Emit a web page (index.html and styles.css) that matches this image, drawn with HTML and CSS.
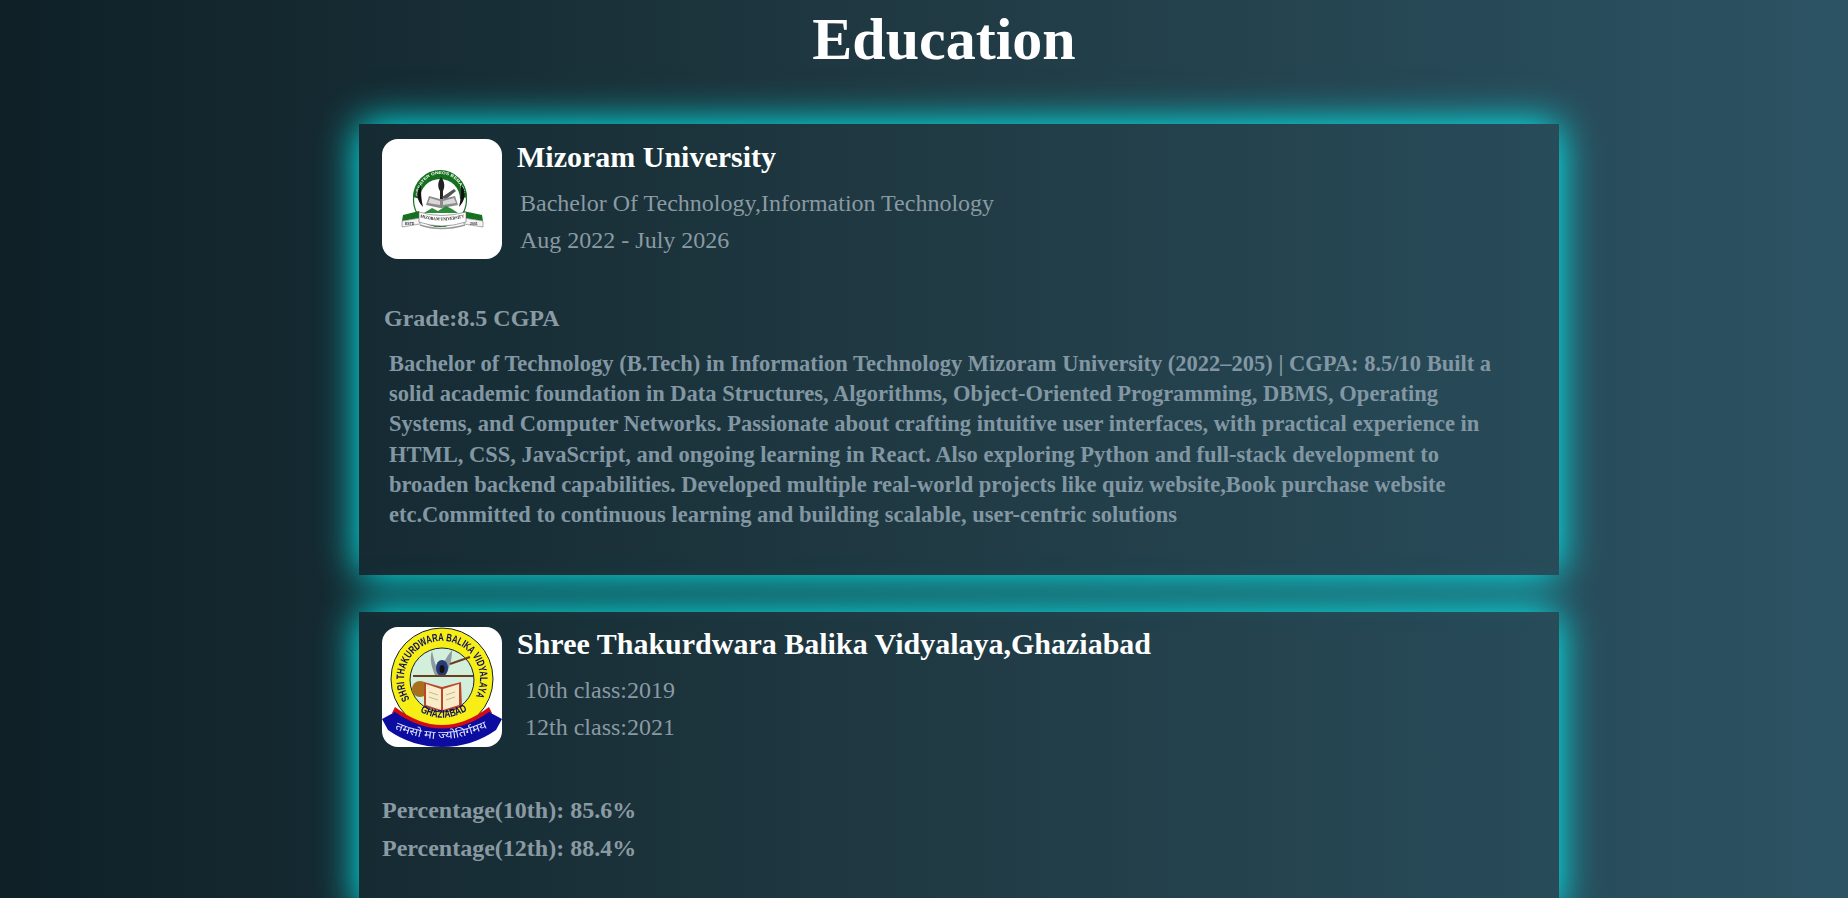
FILE: index.html
```html
<!DOCTYPE html>
<html lang="en">
  <head>
    <meta charset="UTF-8" />
    <meta name="viewport" content="width=device-width, initial-scale=1.0" />
    <title>Education</title>
    <link rel="stylesheet" href="styles.css">
  </head>
  <body>
    <h1 class="page-title">Education</h1>

    <div class="edu-card">
      <div class="edu-head">
        <div class="edu-logo">
          <svg viewBox="0 0 120 120" width="120" height="120">
            <defs>
              <path id="mzuArc" d="M36.500 57 A22 22 0 0 1 80.500 57" />
              <path id="mzuBan" d="M37 78 Q59 85 84 78" />
            </defs>
            <circle cx="58" cy="61" r="26.500" fill="#fff" stroke="#15701f" stroke-width="1.2" />
            <path d="M31 58 A27 27 0 0 1 85 58 L78 60 A20 20 0 0 0 38 60 Z" fill="#15701f" />
            <text class="mzu-arc-text"><textPath href="#mzuArc" textLength="66" lengthAdjust="spacingAndGlyphs">GREATER ONEOS BEMAGN</textPath></text>
            <path d="M59 38 C55 44 56 49 58 52 L58 60 L61 60 L61 52 C63 48 63 43 59 38 Z" fill="#222" />
            <path d="M60 58 L72 50 L74 52 L63 61 Z" fill="#555" />
            <path d="M47 57 L58 60 L60 60 L73 57 L76 66 L60 69 L58 69 L44 66 Z" fill="#8b8b8b" />
            <path d="M48 59 L58 62 L58 66 L46 64 Z M61 62 L72 59 L74 64 L61 66 Z" fill="#d8d8d8" />
            <path d="M39 46 C33 53 35 62 41 68 C39 60 39 54 39 46 Z" fill="#111" />
            <path d="M79 46 C85 53 83 62 77 68 C79 60 79 54 79 46 Z" fill="#111" />
            <path d="M42 74 L50 69 L56 72 L64 67 L70 70 L76 74 Z" fill="#2d8a3a" />
            <path d="M21 76 L37 72 L38 79 L20 82 Z M81 72 L100 76 L101 82 L82 79 Z" fill="#15701f" />
            <path d="M20 82 L38 79 L38 85 L20 88 Z M82 79 L101 82 L101 88 L82 85 Z" fill="#f4f4f4" stroke="#777" stroke-width=".6" />
            <path d="M37 73 Q59 80 84 73 L84 83 Q59 91 37 83 Z" fill="#fff" stroke="#666" stroke-width=".6" />
            <path d="M38 86 Q59 93 83 86" fill="none" stroke="#999" stroke-width="1.500" />
            <text class="mzu-ban-text"><textPath href="#mzuBan" textLength="45" lengthAdjust="spacingAndGlyphs" startOffset="1">MIZORAM UNIVERSITY</textPath></text>
            <text class="mzu-year-text" x="23" y="86">ESTD</text>
            <text class="mzu-year-text" x="88" y="86">2001</text>
          </svg>
        </div>
        <div class="edu-info">
          <h2 class="edu-name">Mizoram University</h2>
          <p class="edu-line">Bachelor Of Technology,Information Technology</p>
          <p class="edu-line">Aug 2022 - July 2026</p>
        </div>
      </div>
      <p class="edu-grade">Grade:8.5 CGPA</p>
      <p class="edu-desc">Bachelor of Technology (B.Tech) in Information Technology Mizoram University (2022–205) | CGPA: 8.5/10 Built a solid academic foundation in Data Structures, Algorithms, Object-Oriented Programming, DBMS, Operating Systems, and Computer Networks. Passionate about crafting intuitive user interfaces, with practical experience in HTML, CSS, JavaScript, and ongoing learning in React. Also exploring Python and full-stack development to broaden backend capabilities. Developed multiple real-world projects like quiz website,Book purchase website etc.Committed to continuous learning and building scalable, user-centric solutions</p>
    </div>

    <div class="edu-card">
      <div class="edu-head">
        <div class="edu-logo">
          <svg viewBox="0 0 120 120" width="120" height="120">
            <defs>
              <path id="stbArc" d="M27.800 72.100 A38 38 0 1 1 92.200 72.100" />
              <path id="stbGhz" d="M37 84 Q60 98 86 83" />
              <path id="stbMotto" d="M11 101 Q60 124 109 99" />
            </defs>
            <circle cx="60" cy="52" r="51" fill="#f6ee14" stroke="#123" stroke-width="1" />
            <circle cx="60" cy="53" r="32" fill="#d2efdc" stroke="#123" stroke-width="1" />
            <path d="M50 24 C52 34 54 40 58 46 C60 38 64 30 70 23 C70 32 68 42 62 50 L54 50 C50 42 47 32 50 24 Z" fill="#8d9ba0" />
            <ellipse cx="60" cy="41" rx="6" ry="8" fill="#263a78" />
            <ellipse cx="60" cy="42" rx="2.500" ry="4" fill="#111" />
            <path d="M31 49 L91 49 M68 37 L88 30" stroke="#6a3f1c" stroke-width="2" />
            <circle cx="38" cy="62" r="8" fill="#a8701c" />
            <path d="M42 55 L60 60 L79 55 L80 80 L60 85 L42 80 Z" fill="#b9462f" />
            <path d="M44 57 L59 62 L59 83 L44 78 Z M61 62 L77 57 L77 78 L61 83 Z" fill="#f8edc8" />
            <path d="M47 65 L56 68 M47 70 L56 73 M64 68 L73 65 M64 73 L73 70" stroke="#c9b98a" stroke-width="1" />
            <path d="M13 80 Q60 116 107 80 L110 86 Q60 122 10 86 Z" fill="#d60b12" />
            <path d="M0 92 L13 85 Q60 118 107 85 L120 92 L114 103 Q90 120 60 120 Q30 120 6 103 Z" fill="#0c0ca0" />
            <text class="stb-arc-text"><textPath href="#stbArc" textLength="158" lengthAdjust="spacingAndGlyphs">SHRI THAKURDWARA BALIKA VIDYALAYA</textPath></text>
            <text class="stb-ghz-text"><textPath href="#stbGhz" textLength="50" lengthAdjust="spacingAndGlyphs" startOffset="1">GHAZIABAD</textPath></text>
            <text class="stb-motto-text"><textPath href="#stbMotto" textLength="96" lengthAdjust="spacingAndGlyphs" startOffset="2">तमसो मा ज्योतिर्गमय</textPath></text>
          </svg>
        </div>
        <div class="edu-info edu-info-up">
          <h2 class="edu-name">Shree Thakurdwara Balika Vidyalaya,Ghaziabad</h2>
          <p class="edu-line edu-line-in">10th class:2019</p>
          <p class="edu-line edu-line-in">12th class:2021</p>
        </div>
      </div>
      <p class="edu-pct edu-pct-first">Percentage(10th): 85.6%</p>
      <p class="edu-pct">Percentage(12th): 88.4%</p>
    </div>
  </body>
</html>
```

FILE: styles.css
```css
html,
body {
  margin: 0;
  padding: 0;
}

body {
  font-family: "Liberation Serif", "Times New Roman", serif;
  background: linear-gradient(to right, #0f2027, #203a43, #2c5364);
  background-attachment: fixed;
  color: #fff;
  height: 898px;
  overflow: hidden;
}

.page-title {
  font-size: 60px;
  line-height: 69px;
  margin: 5px 0 50px;
  padding-left: 40px;
  text-align: center;
}

.edu-card {
  width: 1200px;
  box-sizing: border-box;
  margin: 0 0 37px 359px;
  padding: 15px 22px 45px 23px;
  box-shadow: 0 0 38px #00ffff;
}

.edu-head {
  display: flex;
  align-items: flex-start;
}

.edu-logo {
  width: 120px;
  height: 120px;
  border-radius: 16px;
  background: #fff;
  overflow: hidden;
  flex-shrink: 0;
}

.edu-logo svg {
  display: block;
  filter: blur(0.35px);
}

.edu-info {
  margin-left: 15px;
}

.edu-info-up {
  margin-top: -1px;
}

.edu-name {
  font-size: 30px;
  line-height: 32px;
  margin: 2px 0 12px;
}

.edu-line {
  font-size: 24px;
  line-height: 37px;
  margin: 0 0 0 3px;
  color: #8a9aa3;
}

.edu-line-in {
  margin-left: 8px;
}

.edu-grade {
  font-size: 24px;
  font-weight: bold;
  line-height: 30px;
  margin: 44px 0 0 2px;
  color: #8a9aa3;
}

.edu-desc {
  font-size: 22.500px;
  font-weight: bold;
  line-height: 30.240px;
  margin: 16px 40px 0 7px;
  color: #8297a3;
}

.edu-pct {
  font-size: 24px;
  font-weight: bold;
  line-height: 38px;
  margin: 0;
  color: #8a9aa3;
}

.edu-pct-first {
  margin-top: 44px;
}

.mzu-arc-text {
  font: bold 4px "Liberation Sans", sans-serif;
  fill: #fff;
}

.mzu-ban-text {
  font: bold 4.500px "Liberation Serif", serif;
  fill: #222;
}

.mzu-year-text {
  font: bold 3.500px "Liberation Sans", sans-serif;
  fill: #333;
}

.stb-arc-text {
  font: bold 11px "Liberation Sans", sans-serif;
  fill: #0c0c60;
}

.stb-ghz-text {
  font: bold 11px "Liberation Sans", sans-serif;
  fill: #0c0c60;
}

.stb-motto-text {
  font: 11px "Noto Sans", "Noto Sans CJK SC", "DejaVu Sans", sans-serif;
  fill: #dfe6ff;
}
```
